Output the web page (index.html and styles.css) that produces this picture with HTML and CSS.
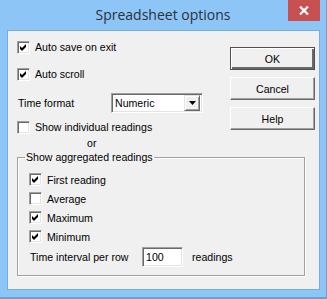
FILE: index.html
```html
<!DOCTYPE html>
<html lang="en">
<head>
    <meta charset="UTF-8">
    <title>Spreadsheet options</title>
    <link rel="stylesheet" href="styles.css">
</head>
<body>
    <div class="window">
        <div class="titlebar">
            <span></span>
            <span class="title">Spreadsheet options</span>
            <span class="close">
                <svg width="10" height="9" viewBox="0 0 10 9"><path d="M1 0.5 L9 8.5 M9 0.5 L1 8.5" stroke="#fff" stroke-width="2.2"/></svg>
            </span>
        </div>
        <div class="client">
            <div class="top">
                <div class="options">
                    <label class="check-row first"><span class="box"><svg width="7" height="7" viewBox="0 0 7 7"><path d="M0 2 L2 4 L6 0 L6 3 L2 7 L0 5 Z"/></svg></span>Auto save on exit</label>
                    <label class="check-row second"><span class="box"><svg width="7" height="7" viewBox="0 0 7 7"><path d="M0 2 L2 4 L6 0 L6 3 L2 7 L0 5 Z"/></svg></span>Auto scroll</label>
                    <div class="format-row">
                        <span class="format-label">Time format</span>
                        <div class="combo">
                            <span class="combo-text">Numeric</span>
                            <span class="combo-btn"><svg width="7" height="4" viewBox="0 0 7 4"><path d="M0 0 H7 L3.5 4 Z"/></svg></span>
                        </div>
                    </div>
                    <label class="check-row fourth"><span class="box"></span>Show individual readings</label>
                </div>
                <div class="buttons">
                    <button class="btn default">OK</button>
                    <button class="btn">Cancel</button>
                    <button class="btn">Help</button>
                </div>
            </div>
            <div class="or">or</div>
            <fieldset class="group">
                <legend>Show aggregated readings</legend>
                <label class="check-row agg"><span class="box"><svg width="7" height="7" viewBox="0 0 7 7"><path d="M0 2 L2 4 L6 0 L6 3 L2 7 L0 5 Z"/></svg></span>First reading</label>
                <label class="check-row agg"><span class="box"></span>Average</label>
                <label class="check-row agg"><span class="box"><svg width="7" height="7" viewBox="0 0 7 7"><path d="M0 2 L2 4 L6 0 L6 3 L2 7 L0 5 Z"/></svg></span>Maximum</label>
                <label class="check-row agg"><span class="box"><svg width="7" height="7" viewBox="0 0 7 7"><path d="M0 2 L2 4 L6 0 L6 3 L2 7 L0 5 Z"/></svg></span>Minimum</label>
                <div class="interval-row">
                    <span class="interval-label">Time interval per row</span>
                    <span class="field">100</span>
                    <span>readings</span>
                </div>
            </fieldset>
        </div>
    </div>
</body>
</html>
```

FILE: styles.css
```css
/* Spreadsheet options dialog */
body {
    margin: 0;
    font-family: "Liberation Sans", Arial, sans-serif;
    font-size: 10.6px;
    color: #000;
}

.window {
    width: 327px;
    height: 299px;
    box-sizing: border-box;
    background-color: #8dc6f6;
    border-right: 1px solid #6d9fcf;
    border-bottom: 2px solid #6d9fcf;
}

.titlebar {
    height: 30px;
    display: grid;
    grid-template-columns: 1fr auto 1fr;
}

.title {
    font-family: "Open Sans", "Noto Sans", sans-serif;
    font-size: 14px;
    color: #2b303a;
    line-height: 30px;
}

.close {
    justify-self: end;
    margin-right: 6px;
    width: 32px;
    height: 21px;
    background-color: #c75050;
    display: flex;
    align-items: center;
    justify-content: center;
}

.client {
    margin-left: 7px;
    width: 313px;
    height: 260px;
    box-sizing: border-box;
    border: 1px solid #78acdc;
    background-color: #f0f0f0;
    padding: 0 4px 0 9px;
}

.top {
    display: flex;
}

.options {
    flex: 1;
    padding-top: 7px;
}

.check-row {
    display: flex;
    align-items: center;
    height: 18px;
}

.check-row.second {
    margin-top: 9px;
}

.check-row.fourth {
    margin-top: 5px;
}

.box {
    width: 13px;
    height: 13px;
    box-sizing: border-box;
    margin-right: 5px;
    background-color: #fff;
    border: 1px solid;
    border-color: #a0a0a0 #fff #fff #a0a0a0;
    box-shadow: inset 1px 1px 0 #696969, inset -1px -1px 0 #e3e3e3;
    display: flex;
    align-items: center;
    justify-content: center;
    flex-shrink: 0;
}

.format-row {
    display: flex;
    align-items: center;
    margin-top: 10px;
    height: 20px;
}

.format-label {
    width: 94px;
    padding-left: 1px;
    box-sizing: border-box;
}

.combo {
    width: 92px;
    height: 20px;
    box-sizing: border-box;
    background-color: #fff;
    border: 1px solid;
    border-color: #a0a0a0 #fff #fff #a0a0a0;
    box-shadow: inset 1px 1px 0 #696969, inset -1px -1px 0 #e3e3e3;
    display: flex;
    align-items: center;
    padding: 2px 2px 2px 3px;
}

.combo-text {
    flex: 1;
}

.combo-btn {
    width: 16px;
    height: 16px;
    box-sizing: border-box;
    background-color: #f0f0f0;
    border: 1px solid;
    border-color: #e3e3e3 #696969 #696969 #e3e3e3;
    box-shadow: inset 1px 1px 0 #fff, inset -1px -1px 0 #a0a0a0;
    display: flex;
    align-items: center;
    justify-content: center;
}

.buttons {
    padding-top: 16px;
    display: flex;
    flex-direction: column;
    gap: 7px;
}

.btn {
    width: 85px;
    height: 23px;
    font-family: "Liberation Sans", Arial, sans-serif;
    font-size: 10.6px;
    color: #000;
    background-color: #f0f0f0;
    border: 1px solid;
    border-color: #fff #696969 #696969 #fff;
    box-shadow: inset -1px -1px 0 #a0a0a0;
    padding: 0;
}

.btn.default {
    border: 1px solid #505050;
    box-shadow: inset 1px 1px 0 #fff, inset -2px -2px 0 #696969;
}

.or {
    height: 14px;
    line-height: 14px;
    padding-left: 70px;
}

.group {
    width: 288px;
    height: 126px;
    box-sizing: border-box;
    margin: 0;
    padding: 0 0 0 11px;
    border: 1px solid #a0a0a0;
    box-shadow: inset 1px 1px 0 #fff, 1px 1px 0 #fff;
}

.group legend {
    margin-left: -4px;
    padding: 0 1px;
    line-height: 14px;
}

.check-row.agg {
    height: 19px;
}

.check-row.agg:first-of-type {
    margin-top: 6px;
}

.interval-row {
    display: flex;
    align-items: center;
    height: 22px;
}

.interval-label {
    width: 113px;
    padding-left: 1px;
    box-sizing: border-box;
}

.field {
    width: 41px;
    height: 20px;
    box-sizing: border-box;
    margin-right: 9px;
    background-color: #fff;
    border: 1px solid;
    border-color: #a0a0a0 #fff #fff #a0a0a0;
    box-shadow: inset 1px 1px 0 #696969, inset -1px -1px 0 #e3e3e3;
    padding: 3px 0 0 3px;
}
```
